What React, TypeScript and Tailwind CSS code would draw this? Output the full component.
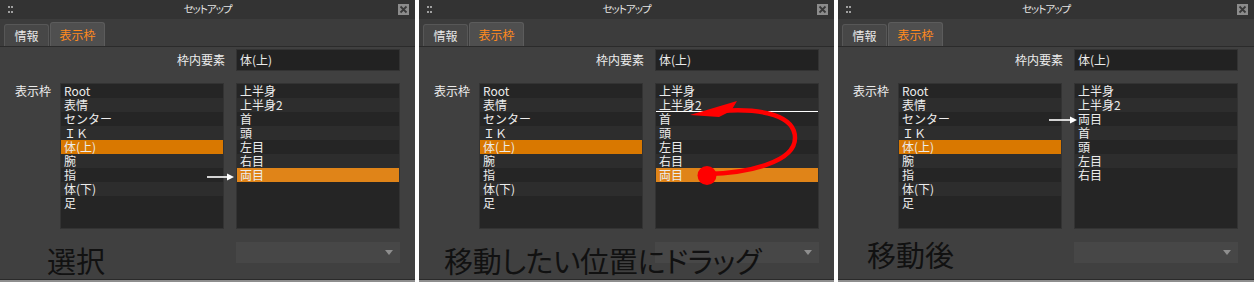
import React from "react";

type PanelProps = {
  rightItems: string[];
  rightSelected?: number;
  dropAfter?: number;
  caption: string;
  captionClass: string;
  width: string;
  overlay: React.ReactNode;
};

const leftItems = ["Root", "表情", "センター", "ＩＫ", "体(上)", "腕", "指", "体(下)", "足"];

const ListBox = ({
  items,
  selected,
  selectedColor,
  dropAfter,
}: {
  items: string[];
  selected?: number;
  selectedColor: string;
  dropAfter?: number;
}) => (
  <div className="flex h-[146px] w-[164px] flex-col border border-[#333] bg-[#252525]">
    {items.map((item, i) => (
      <div
        key={i}
        className={
          "h-[14px] shrink-0 pl-[3px] text-[12px] leading-[13px] text-[#ececec] " +
          (i === selected ? selectedColor : i % 2 === 1 ? "bg-[#2d2d2d]" : "bg-[#252525]") +
          (dropAfter === i ? " border-b border-white" : "")
        }
      >
        {item}
      </div>
    ))}
  </div>
);

const Panel = ({ rightItems, rightSelected, dropAfter, caption, captionClass, width, overlay }: PanelProps) => (
  <div className={"relative flex h-[282px] shrink-0 flex-col bg-[#404040] " + width}>
    {/* title bar */}
    <div className="grid h-[19px] grid-cols-[1fr_auto_1fr] items-center bg-[#333333]">
      <div className="grid w-[7px] grid-cols-2 gap-x-[3px] gap-y-[3px] pl-[8px]">
        <span className="h-[2px] w-[2px] bg-[#a0a0a0]" />
        <span className="h-[2px] w-[2px] bg-[#a0a0a0]" />
        <span className="h-[2px] w-[2px] bg-[#a0a0a0]" />
        <span className="h-[2px] w-[2px] bg-[#a0a0a0]" />
      </div>
      <div className="text-[10.5px] leading-none tracking-[-1px] text-[#e4e4e4] [font-feature-settings:'palt']">
        セットアップ
      </div>
      <div className="flex justify-end pr-[6px]">
        <div className="flex h-[11px] w-[11px] items-center justify-center bg-[#8c8c8c]">
          <svg width="9" height="9" viewBox="0 0 9 9">
            <path d="M1.5 1.5 L7.5 7.5 M7.5 1.5 L1.5 7.5" stroke="#3a3a3a" strokeWidth="1.8" />
          </svg>
        </div>
      </div>
    </div>

    {/* tabs */}
    <div className="flex h-[28px] items-end gap-[1px] border-b border-[#2b2b2b] bg-[#3c3c3c] pl-[4px]">
      <div className="flex h-[22px] w-[45px] items-center justify-center rounded-t-[3px] border border-b-0 border-[#575757] bg-[#474747] text-[12px] text-[#e6e6e6]">
        情報
      </div>
      <div className="flex h-[24px] w-[55px] items-center justify-center rounded-t-[3px] border border-b-0 border-[#5c5c5c] bg-[#4f4f4f] text-[12px] text-[#ff8a1e]">
        表示枠
      </div>
    </div>

    {/* 枠内要素 */}
    <div className="mt-[2px] flex h-[22px] items-center">
      <div className="w-[225px] text-right text-[12px] text-[#ececec]">枠内要素</div>
      <div className="ml-[11px] flex h-[22px] w-[164px] items-center border border-[#333] bg-[#222222] pl-[3px] text-[12px] text-[#ececec]">
        体(上)
      </div>
    </div>

    {/* lists */}
    <div className="mt-[12px] flex">
      <div className="w-[60px] pl-[15px] pt-[1px] text-[12px] leading-[14px] text-[#ececec]">表示枠</div>
      <ListBox items={leftItems} selected={4} selectedColor="bg-[#d97800]" />
      <div className="ml-[12px]">
        <ListBox items={rightItems} selected={rightSelected} selectedColor="bg-[#e08418]" dropAfter={dropAfter} />
      </div>
    </div>

    {/* dropdown */}
    <div className="ml-[236px] mt-[13px] flex h-[21px] w-[164px] items-center justify-end bg-[#474747] pr-[7px]">
      <svg width="8" height="5" viewBox="0 0 8 5">
        <path d="M0 0 L8 0 L4 5 Z" fill="#8e8e8e" />
      </svg>
    </div>

    <div className="flex-1" />
    <div className="h-[3px] border-t border-[#2a2a2a] bg-[#8e8e8e]" />

    {/* annotations over the panel */}
    <div className={"pointer-events-none absolute leading-none text-[#111] [font-feature-settings:'palt'] " + captionClass}>
      {caption}
    </div>
    <svg className="pointer-events-none absolute left-0 top-0" width="416" height="282">
      {overlay}
    </svg>
  </div>
);

const WhiteArrow = ({ x1, x2, y }: { x1: number; x2: number; y: number }) => (
  <g>
    <line x1={x1} y1={y} x2={x2 - 5} y2={y} stroke="#fff" strokeWidth="1.6" />
    <path d={`M${x2} ${y} L${x2 - 7} ${y - 3.5} L${x2 - 7} ${y + 3.5} Z`} fill="#fff" />
  </g>
);

export default function App() {
  const items = ["上半身", "上半身2", "首", "頭", "左目", "右目", "両目"];
  return (
    <div className="flex h-[282px] w-[1254px] gap-[4px] bg-white font-['Noto_Sans_CJK_JP','Noto_Sans',sans-serif]">
      <Panel
        width="w-[415px]"
        rightItems={items}
        rightSelected={6}
        caption="選択"
        captionClass="left-[47px] top-[246px] text-[29px]"
        overlay={<WhiteArrow x1={207} x2={234} y={177} />}
      />
      <Panel
        width="w-[415px]"
        rightItems={items}
        rightSelected={6}
        dropAfter={1}
        caption="移動したい位置にドラッグ"
        captionClass="left-[25px] top-[246px] text-[29px] tracking-[-0.3px]"
        overlay={
          <g>
            <path
              d="M288 174 C330 173 376 162 376 138 C376 116 345 108 302 111"
              fill="none"
              stroke="#ff0000"
              strokeWidth="4.5"
            />
            <path d="M271 115 L318 101 L312 111 L300 117 Z" fill="#ff0000" />
            <circle cx="288" cy="175.5" r="9.5" fill="#ff0000" />
          </g>
        }
      />
      <Panel
        width="w-[416px]"
        rightItems={["上半身", "上半身2", "両目", "首", "頭", "左目", "右目"]}
        caption="移動後"
        captionClass="left-[29px] top-[240px] text-[29px]"
        overlay={<WhiteArrow x1={211} x2={239} y={120} />}
      />
    </div>
  );
}
